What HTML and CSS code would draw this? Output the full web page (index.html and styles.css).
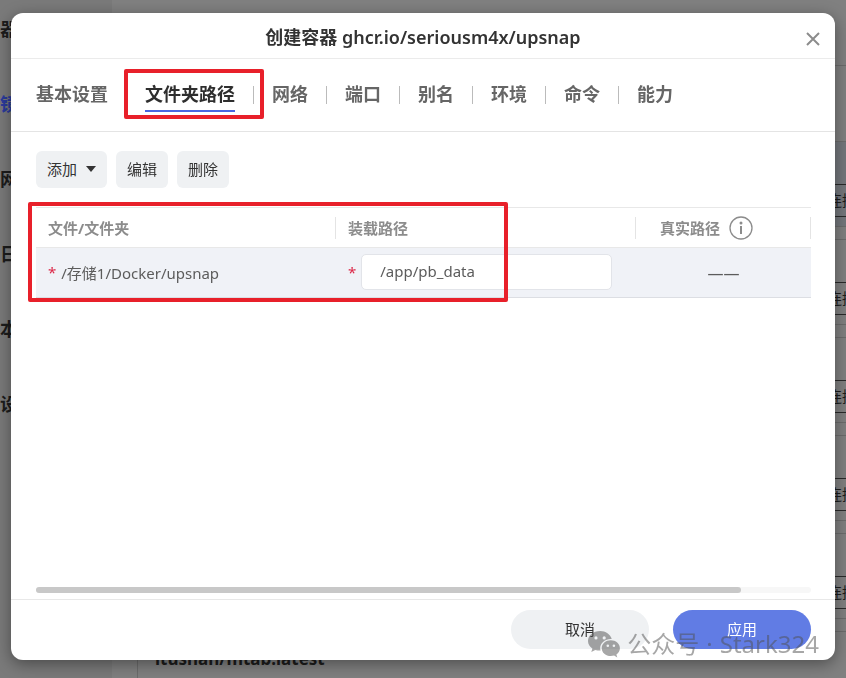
FILE: index.html
```html
<!DOCTYPE html>
<html lang="zh-CN">
<head>
    <meta charset="UTF-8">
    <meta name="viewport" content="width=device-width, initial-scale=1.0">
    <title>创建容器</title>
    <link rel="stylesheet" href="styles.css">
</head>
<body>

    <!-- Página de fondo -->
    <div class="page">
        <nav class="sidebar">
            <a href="#">器</a>
            <a href="#" class="current">镜</a>
            <a href="#">网</a>
            <a href="#">日</a>
            <a href="#">本</a>
            <a href="#">设</a>
        </nav>
        <main class="images">
            <div class="images-bar"></div>
            <div class="image-card selected"><button type="button">连接</button></div>
            <div class="image-card"><button type="button">连接</button></div>
            <div class="image-card"><button type="button">连接</button></div>
            <div class="image-card"><button type="button">连接</button></div>
            <div class="image-card"><button type="button">连接</button></div>
            <div class="image-card"><h3>itushan/mtab:latest</h3></div>
        </main>
    </div>

    <!-- Diálogo -->
    <div class="overlay">
        <section class="dialog" role="dialog" aria-labelledby="dialogTitle">
            <header class="dialog-header">
                <h1 id="dialogTitle">创建容器 ghcr.io/seriousm4x/upsnap</h1>
                <button type="button" class="close" aria-label="关闭">
                    <svg width="14" height="14" viewBox="0 0 14 14"><path d="M1 1l12 12M13 1L1 13" fill="none" stroke="#8c8c8c" stroke-width="2"/></svg>
                </button>
            </header>

            <nav class="tabs">
                <button type="button" class="tab">基本设置</button>
                <span class="separator hidden"></span>
                <button type="button" class="tab active">文件夹路径<span class="mark mark-tab"></span></button>
                <span class="separator"></span>
                <button type="button" class="tab">网络</button>
                <span class="separator"></span>
                <button type="button" class="tab">端口</button>
                <span class="separator"></span>
                <button type="button" class="tab">别名</button>
                <span class="separator"></span>
                <button type="button" class="tab">环境</button>
                <span class="separator"></span>
                <button type="button" class="tab">命令</button>
                <span class="separator"></span>
                <button type="button" class="tab">能力</button>
            </nav>

            <div class="dialog-body">
                <div class="toolbar">
                    <button type="button">添加
                        <svg width="10" height="6" viewBox="0 0 10 6"><path d="M0 0h10L5 6z" fill="#333"/></svg>
                    </button>
                    <button type="button">编辑</button>
                    <button type="button">删除</button>
                </div>

                <div class="table-wrap">
                    <table>
                        <thead>
                            <tr>
                                <th class="col-path"><div class="head">文件/文件夹</div></th>
                                <th class="col-path"><div class="head">装载路径</div></th>
                                <th><div class="head head-real">真实路径
                                    <svg width="24" height="24" viewBox="0 0 24 24"><circle cx="12" cy="12" r="11" fill="none" stroke="#8c8c8c" stroke-width="1.3"/><circle cx="12" cy="7" r="1.5" fill="#8c8c8c"/><path d="M12 10v8" fill="none" stroke="#8c8c8c" stroke-width="2"/></svg>
                                </div></th>
                            </tr>
                        </thead>
                        <tbody>
                            <tr>
                                <td><div class="cell"><span class="required">*</span>/存储1/Docker/upsnap</div></td>
                                <td><div class="cell"><label class="required" for="mountPath">*</label><input id="mountPath" type="text" value="/app/pb_data"></div></td>
                                <td class="real">——</td>
                            </tr>
                        </tbody>
                    </table>
                    <span class="mark mark-table"></span>
                </div>

                <div class="scrollbar"><div class="thumb"></div></div>
            </div>

            <footer class="dialog-footer">
                <button type="button">取消</button>
                <button type="button" class="primary">应用</button>
            </footer>
        </section>
    </div>

    <!-- Marca de agua -->
    <div class="watermark">
        <svg width="32" height="27" viewBox="0 0 32 27">
            <path fill-rule="evenodd" d="M12 0C5.400 0 0 4.400 0 10c0 3.100 1.700 5.800 4.400 7.600L3.300 21l4-2.100c1.500.5 3 .7 4.700.7h.6c-.3-.9-.4-1.700-.4-2.600 0-5 4.900-9 10.600-9h.9C22.500 3.300 17.600 0 12 0zM8 5.300a1.600 1.600 0 1 1 0 3.200 1.600 1.600 0 0 1 0-3.200zm8.200 0a1.600 1.600 0 1 1 0 3.200 1.600 1.600 0 0 1 0-3.200z"/>
            <path fill-rule="evenodd" d="M22.800 9.300c-5 0-9.100 3.500-9.100 7.900s4.100 7.900 9.100 7.900c1.200 0 2.300-.2 3.300-.5l3.200 1.800-.9-2.900c2.200-1.500 3.500-3.700 3.500-6.300 0-4.400-4.100-7.900-9.100-7.900zm-3 4.100a1.300 1.300 0 1 1 0 2.600 1.300 1.300 0 0 1 0-2.600zm6.100 0a1.300 1.300 0 1 1 0 2.600 1.300 1.300 0 0 1 0-2.600z"/>
        </svg>
        <span>公众号</span>
        <span>·</span>
        <span>Stark324</span>
    </div>

</body>
</html>
```

FILE: styles.css
```css
/* Estilos generales */
* {
    box-sizing: border-box;
}

body {
    margin: 0;
    height: 100vh;
    overflow: hidden;
    font-family: "Noto Sans", "Noto Sans CJK SC", sans-serif;
    font-size: 15px;
    color: #333;
    background-color: #808080;
}

button,
input {
    font-family: inherit;
    font-size: 15px;
    color: inherit;
    border: none;
    padding: 0;
}

button {
    cursor: pointer;
}

h1,
h3 {
    margin: 0;
    font-size: 18px;
}

/* Página de fondo */
.page {
    display: flex;
    height: 100%;
}

.sidebar {
    display: flex;
    flex-direction: column;
    flex: 0 0 112px;
    gap: 45px;
    padding-top: 14px;
    background-color: #7a7a7a;
}

.sidebar a {
    font-size: 18px;
    font-weight: 700;
    line-height: 30px;
    color: #1c1c1c;
    text-decoration: none;
}

.sidebar a.current {
    color: #2b3a9c;
}

.images {
    flex: 1;
    display: flex;
    flex-direction: column;
    gap: 12px;
    padding-left: 25px;
    overflow: hidden;
}

.images-bar {
    flex: 0 0 66px;
    margin-bottom: 63px;
    border-bottom: 1px solid #6c6c6c;
}

.image-card {
    display: flex;
    flex: 0 0 86px;
    align-items: flex-end;
    justify-content: flex-end;
    padding-bottom: 9px;
    border: 1px solid #6c6c6c;
    border-right: none;
}

.image-card.selected {
    background-color: #74777c;
}

.image-card button {
    width: 32px;
    height: 33px;
    padding: 0 0 2px 12px;
    overflow: hidden;
    white-space: nowrap;
    text-align: left;
    color: #1c1c1c;
    background: none;
    border: 1px solid #2a2a2a;
    border-right: none;
}

.image-card h3 {
    margin: 0 auto auto 17px;
    padding-top: 15px;
    font-size: 17px;
    color: #1c1c1c;
}

/* Diálogo */
.overlay {
    position: fixed;
    inset: 0;
    display: flex;
    padding: 13px 11px 18px;
}

.dialog {
    flex: 1;
    display: flex;
    flex-direction: column;
    min-width: 0;
    background-color: #fff;
    border-radius: 12px;
    box-shadow: 0 4px 16px rgba(0, 0, 0, 0.4);
}

.dialog-header {
    display: flex;
    align-items: center;
    height: 46px;
    padding: 0 15px 0 29px;
    border-bottom: 1px solid #ebebeb;
}

.dialog-header h1 {
    flex: 1;
    font-weight: 600;
    text-align: center;
}

.close {
    display: flex;
    padding-top: 6px;
    background: none;
}

.tabs {
    display: flex;
    align-items: center;
    gap: 18px;
    height: 73px;
    padding: 0 25px;
    border-bottom: 1px solid #e4e4e4;
}

.tab {
    position: relative;
    height: 34px;
    font-size: 18px;
    font-weight: 700;
    line-height: 26px;
    white-space: nowrap;
    color: #666;
    background: none;
    border-bottom: 2px solid transparent;
}

.tab.active {
    color: #2e2e2e;
    border-bottom-color: #4a66e0;
}

.separator {
    width: 1px;
    height: 18px;
    background-color: #bbb;
}

.separator.hidden {
    visibility: hidden;
}

.dialog-body {
    flex: 1;
    display: flex;
    flex-direction: column;
    padding: 19px 24px 6px 25px;
}

.toolbar {
    display: flex;
    gap: 9px;
    margin-bottom: 19px;
}

.toolbar button {
    display: flex;
    align-items: center;
    gap: 9px;
    height: 37px;
    padding: 0 11px 2px;
    background-color: #eff1f3;
    border-radius: 6px;
}

/* Tabla */
.table-wrap {
    position: relative;
}

table {
    width: 100%;
    table-layout: fixed;
    border-collapse: collapse;
    color: #5c5c5c;
}

th,
td {
    padding: 0;
    text-align: left;
}

thead tr {
    height: 40px;
    border-top: 1px solid #e8e8e8;
    border-bottom: 1px solid #e8e8e8;
}

tbody tr {
    height: 50px;
    background-color: #f0f2f7;
    border-bottom: 1px solid #dcdee3;
}

.col-path {
    width: 300px;
}

.head {
    display: flex;
    align-items: center;
    gap: 9px;
    height: 22px;
    padding-left: 12px;
    color: #8c8c8c;
    border-right: 1px solid #e4e4e4;
}

.head-real {
    padding-left: 24px;
}

.cell {
    display: flex;
    align-items: center;
    gap: 5px;
    padding: 0 24px 1px 12px;
}

.required {
    color: #dc2848;
}

.cell input {
    flex: 1;
    min-width: 0;
    height: 36px;
    padding: 0 18px 2px;
    background-color: #fff;
    border: 1px solid #e2e4e9;
    border-radius: 5px;
}

.real {
    font-size: 16px;
    text-align: center;
}

.scrollbar {
    height: 6px;
    margin-top: auto;
    background-color: #f7f7f7;
    border-radius: 3px;
}

.thumb {
    width: 91%;
    height: 6px;
    background-color: #c8c8c8;
    border-radius: 3px;
}

.dialog-footer {
    display: flex;
    justify-content: flex-end;
    gap: 24px;
    padding: 10px 24px 11px;
    border-top: 1px solid #e8e8e8;
}

.dialog-footer button {
    width: 138px;
    height: 39px;
    padding-bottom: 2px;
    background-color: #eff1f3;
    border-radius: 20px;
}

.dialog-footer .primary {
    color: #fff;
    background-color: #617ce4;
}

/* Recuadros rojos */
.mark {
    position: absolute;
    border: 4px solid #e8202a;
    border-radius: 2px;
    pointer-events: none;
}

.mark-tab {
    inset: -9px -29px -9px -21px;
}

.mark-table {
    top: -5px;
    left: -8px;
    width: 480px;
    height: 100px;
}

/* Marca de agua */
.watermark {
    position: fixed;
    right: 27px;
    bottom: 18px;
    display: flex;
    align-items: center;
    gap: 7px;
    font-size: 24px;
    line-height: 32px;
    color: #505050;
    opacity: 0.5;
    pointer-events: none;
}

.watermark svg {
    fill: #505050;
}
```
